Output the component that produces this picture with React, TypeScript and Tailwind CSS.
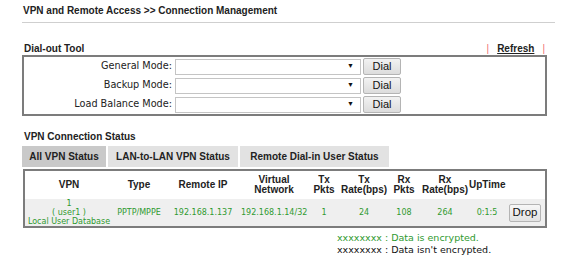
const green = "text-[#2f9a2f]";

const modes = ["General Mode:", "Backup Mode:", "Load Balance Mode:"];

const headers: { l1: string; l2?: string }[] = [
  { l1: "VPN" },
  { l1: "Type" },
  { l1: "Remote IP" },
  { l1: "Virtual", l2: "Network" },
  { l1: "Tx", l2: "Pkts" },
  { l1: "Tx", l2: "Rate(bps)" },
  { l1: "Rx", l2: "Pkts" },
  { l1: "Rx", l2: "Rate(bps)" },
  { l1: "UpTime" },
  { l1: "" },
];

const cols = "grid grid-cols-[88px_52px_76px_66px_34px_46px_34px_48px_36px_1fr]";

export default function App() {
  return (
    <div className="w-[570px] h-[263px] bg-white pl-[22px] pt-[5px] font-['Liberation_Sans',Arial,sans-serif] text-[#222]">
      <div className="w-[533px] border-b border-[#cfcfcf] pb-[5px] pl-[1px]">
        <h1 className="text-[10px] leading-[12px] font-bold">VPN and Remote Access &gt;&gt; Connection Management</h1>
      </div>

      <div className="w-[524px] mt-[18px] flex items-end justify-between pl-[2px] h-[14px]">
        <span className="text-[10px] leading-[12px] font-bold">Dial-out Tool</span>
        <span className="text-[10px] leading-[12px] font-bold flex items-center gap-[8px] pr-[1px]">
          <span className="text-[#f07070] font-normal">|</span>
          <span className="underline">Refresh</span>
          <span className="text-[#f07070] font-normal">|</span>
        </span>
      </div>

      <div className="w-[525px] border-2 border-[#7c7c7c]">
        {modes.map((m) => (
          <div key={m} className="flex items-center h-[19px]">
            <div className="w-[151px] pr-[3px] text-right text-[9.7px] text-[#222] font-['DejaVu_Sans',Verdana,sans-serif]">{m}</div>
            <div className="w-[186px] h-[16px] border border-[#c4c4c4] bg-white flex items-center justify-end pr-[6px]">
              <span className="text-[7px] text-[#111]">▼</span>
            </div>
            <button className="ml-[2px] w-[38px] h-[17px] border border-[#b4b4b4] rounded-[2px] bg-gradient-to-b from-[#f2f2f2] to-[#dcdcdc] text-[11px] leading-none text-[#111]">
              Dial
            </button>
          </div>
        ))}
      </div>

      <div className="mt-[15px] pl-[2px] text-[10px] leading-[12px] font-bold">VPN Connection Status</div>

      <div className="mt-[3px] flex gap-[2px] h-[21px]">
        <div className="w-[84px] bg-[#c9c9c9] flex items-center justify-center text-[10px] font-bold">All VPN Status</div>
        <div className="w-[130px] bg-[#e2e2e2] flex items-center justify-center text-[10px] font-bold">LAN-to-LAN VPN Status</div>
        <div className="w-[149px] bg-[#e2e2e2] flex items-center justify-center text-[10px] font-bold">Remote Dial-in User Status</div>
      </div>

      <div className="w-[524px] ml-[1px] mt-[2px] border-2 border-[#7c7c7c]">
        <div className={`${cols} h-[28px] items-center`}>
          {headers.map((h, i) => (
            <div key={i} className="text-center text-[10px] leading-[10px] font-bold">
              {h.l1}
              {h.l2 && (
                <>
                  <br />
                  {h.l2}
                </>
              )}
            </div>
          ))}
        </div>
        <div className={`${cols} h-[27px] items-center bg-[#efefef] text-[8px] ${green} font-['DejaVu_Sans',Verdana,sans-serif]`}>
          <div className="text-center leading-[9px] whitespace-nowrap">
            1<br />( user1 )<br />Local User Database
          </div>
          <div className="text-center">PPTP/MPPE</div>
          <div className="text-center">192.168.1.137</div>
          <div className="text-center whitespace-nowrap">192.168.1.14/32</div>
          <div className="text-center">1</div>
          <div className="text-center">24</div>
          <div className="text-center">108</div>
          <div className="text-center">264</div>
          <div className="text-center">0:1:5</div>
          <div className="flex justify-start pl-[4px]">
            <button className="w-[32px] h-[18px] border border-[#b4b4b4] rounded-[2px] bg-gradient-to-b from-[#f7f7f7] to-[#e2e2e2] text-[11.5px] leading-none text-[#111] font-['Liberation_Sans',Arial,sans-serif]">
              Drop
            </button>
          </div>
        </div>
      </div>

      <div className="pl-[315px] mt-[4px] text-[9.5px] leading-[12px] font-['DejaVu_Sans',Verdana,sans-serif]">
        <div className={green}>xxxxxxxx : Data is encrypted.</div>
        <div className="text-[#111]">xxxxxxxx : Data isn&apos;t encrypted.</div>
      </div>
    </div>
  );
}
